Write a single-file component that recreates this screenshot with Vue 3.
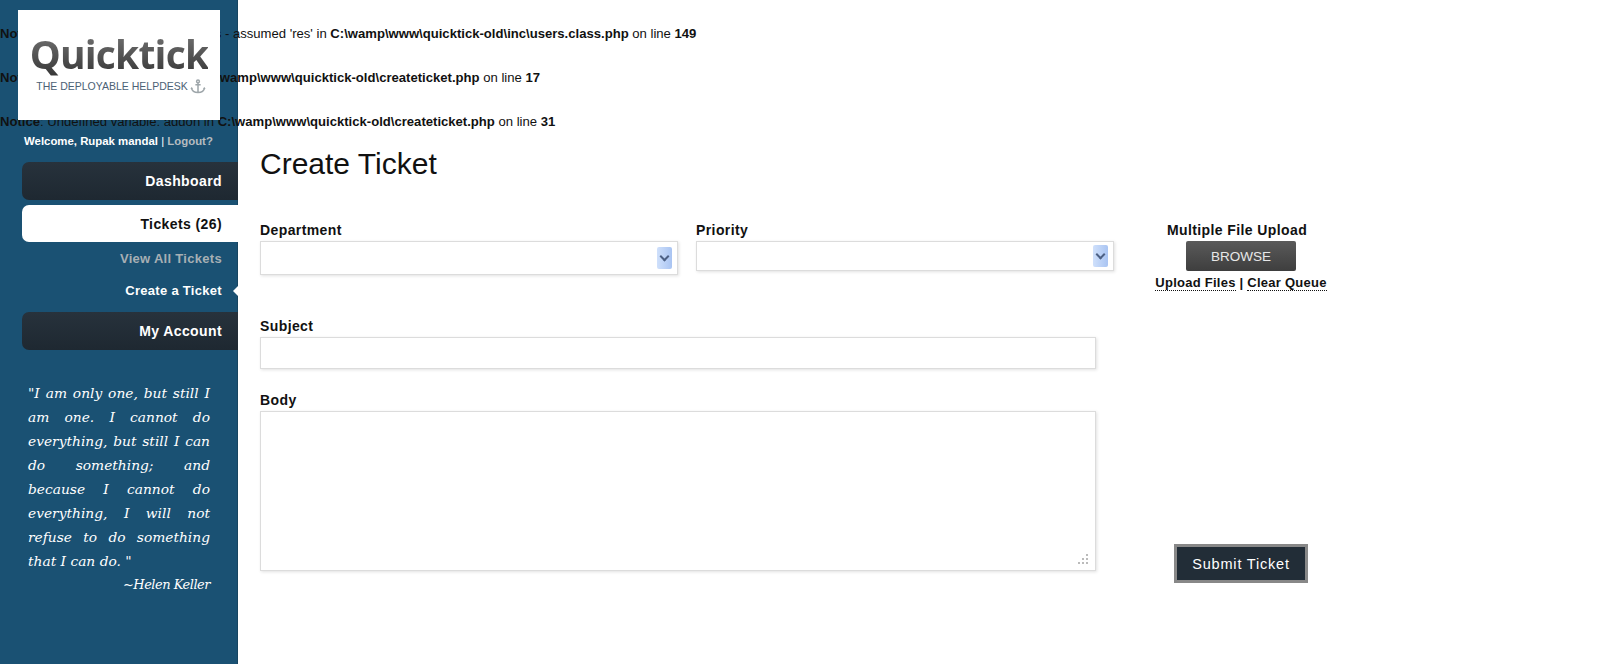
<script setup>
import { ref } from "vue";

const notices = ref([
  { msg: "Use of undefined constant res - assumed 'res' in ", file: "C:\\wamp\\www\\quicktick-old\\inc\\users.class.php", line: 149 },
  { msg: "Undefined variable: sub in ", file: "C:\\wamp\\www\\quicktick-old\\createticket.php", line: 17 },
  { msg: "Undefined variable: addon in ", file: "C:\\wamp\\www\\quicktick-old\\createticket.php", line: 31 },
]);
</script>

<template>
  <div class="page">
    <aside class="sidebar">
      <div class="logo">
        <span class="logo-name">Quicktick</span>
        <span class="logo-tag">
          THE DEPLOYABLE HELPDESK
          <svg width="16" height="15" viewBox="0 0 16 16" fill="none" stroke="#9ea6aa" stroke-width="1.6">
            <circle cx="8" cy="2.600" r="1.500" />
            <path d="M8 4v10.500M5.200 6h5.600M1 9.500c.5 3 3.500 5 7 5s6.500-2 7-5" />
            <path d="M0 10.500l1.200-2 1.500 1.800zM16 10.500l-1.200-2-1.500 1.800z" fill="#9ea6aa" stroke="none" />
          </svg>
        </span>
      </div>
      <p class="welcome">Welcome, Rupak mandal <span class="sep">|</span> <a class="logout">Logout?</a></p>
      <nav class="nav">
        <a class="nav-item">Dashboard</a>
        <a class="nav-item active">Tickets (26)</a>
        <a class="sub-item first">View All Tickets</a>
        <a class="sub-item current">Create a Ticket</a>
        <a class="nav-item">My Account</a>
      </nav>
      <blockquote class="quote">
        <p>"I am only one, but still I am one. I cannot do everything, but still I can do something; and because I cannot do everything, I will not refuse to do something that I can do. "</p>
        <cite>~Helen Keller</cite>
      </blockquote>
    </aside>

    <div class="notices">
      <p v-for="n in notices" :key="n.line">
        <b>Notice</b>: {{ n.msg }}<b>{{ n.file }}</b> on line <b>{{ n.line }}</b>
      </p>
    </div>

    <main class="content">
      <h1>Create Ticket</h1>
      <div class="form">
        <div class="fields">
          <div class="row-top">
            <div class="field dept">
              <label>Department</label>
              <div class="select tall"><span class="arrow"><i></i></span></div>
            </div>
            <div class="field prio">
              <label>Priority</label>
              <div class="select"><span class="arrow"><i></i></span></div>
            </div>
          </div>
          <div class="field subject">
            <label>Subject</label>
            <input type="text" />
          </div>
          <div class="field body">
            <label>Body</label>
            <div class="textarea-wrap">
              <textarea></textarea>
              <svg class="grip" width="10" height="10" viewBox="0 0 10 10" fill="#bbb">
                <rect x="8" y="0" width="2" height="2" />
                <rect x="4" y="4" width="2" height="2" />
                <rect x="8" y="4" width="2" height="2" />
                <rect x="0" y="8" width="2" height="2" />
                <rect x="4" y="8" width="2" height="2" />
                <rect x="8" y="8" width="2" height="2" />
              </svg>
            </div>
          </div>
        </div>
        <div class="side">
          <div class="upload">
            <strong>Multiple File Upload</strong>
            <button class="browse" type="button">BROWSE</button>
            <div class="links"><a>Upload Files</a> | <a>Clear Queue</a></div>
          </div>
          <button class="submit" type="button">Submit Ticket</button>
        </div>
      </div>
    </main>
  </div>
</template>

<style>
html, body {
  margin: 0;
  background: #fff;
}
</style>

<style scoped>
.page {
  display: grid;
  grid-template-columns: 238px 1fr;
  grid-template-rows: 136px 528px;
  height: 664px;
  overflow: hidden;
  font-family: "Liberation Sans", Arial, sans-serif;
  color: #111;
}

.sidebar {
  grid-column: 1;
  grid-row: 1 / 3;
  background: #1a5173;
  border-right: 1px solid #174561;
  box-sizing: border-box;
  padding-top: 10px;
}

.logo {
  position: relative;
  z-index: 2;
  width: 202px;
  height: 110px;
  margin-left: 18px;
  background: #fff;
  box-sizing: border-box;
  padding-top: 19px;
  display: flex;
  flex-direction: column;
  align-items: center;
}

.logo-name {
  font-family: "Open Sans", sans-serif;
  font-weight: 700;
  font-size: 39px;
  line-height: 50px;
  letter-spacing: -0.8px;
  background: linear-gradient(#777, #333);
  -webkit-background-clip: text;
  background-clip: text;
  color: transparent;
}

.logo-tag {
  display: flex;
  align-items: center;
  gap: 2px;
  padding-left: 4px;
  font-size: 10.5px;
  line-height: 16px;
  color: #4b6175;
  margin-top: -1px;
  white-space: nowrap;
}

.welcome {
  margin: 14px 0 0 24px;
  font-size: 11.4px;
  line-height: 14px;
  font-weight: bold;
  color: #fff;
}

.sep {
  font-weight: normal;
}

.logout {
  color: #b5bcc0;
}

.nav {
  margin: 14px -1px 0 22px;
  display: flex;
  flex-direction: column;
}

.nav-item {
  height: 38px;
  line-height: 39px;
  padding-right: 16px;
  text-align: right;
  font-size: 14px;
  font-weight: bold;
  letter-spacing: 0.4px;
  color: #fff;
  background: linear-gradient(#27323c, #1e2831);
  border-radius: 7px 0 0 7px;
  margin-bottom: 5px;
}

.nav-item.active {
  color: #111;
  background: #fff;
  height: 37px;
  margin-bottom: 0;
}

.sub-item {
  position: relative;
  height: 32px;
  line-height: 32px;
  padding-right: 16px;
  text-align: right;
  font-size: 13px;
  font-weight: bold;
  letter-spacing: 0.3px;
  color: #a7afb4;
}

.sub-item.first {
  margin-top: 1px;
}

.sub-item.current {
  color: #fff;
  margin-bottom: 5px;
}

.sub-item.current::after {
  content: "";
  position: absolute;
  right: 0;
  top: 11px;
  border: 5px solid transparent;
  border-right-color: #fff;
  border-left-width: 0;
}

.quote {
  margin: 26px 27px 0 28px;
  font-family: "DejaVu Serif", serif;
  font-style: italic;
  font-size: 13.8px;
  line-height: 24px;
  color: #fff;
}

.quote p {
  margin: 0;
  text-align: justify;
}

.quote cite {
  display: block;
  text-align: right;
  font-size: 13px;
  letter-spacing: -0.5px;
}

.notices {
  grid-column: 1 / 3;
  grid-row: 1;
  position: relative;
  z-index: 1;
  font-size: 13.1px;
  line-height: 14px;
  padding-top: 27px;
}

.notices p {
  margin: 0 0 30px;
  white-space: nowrap;
}

.content {
  grid-column: 2;
  grid-row: 2;
  padding: 10px 0 0 22px;
}

h1 {
  margin: 0;
  font-size: 30px;
  font-weight: normal;
  line-height: 36px;
}

label,
.upload strong {
  display: block;
  font-size: 14px;
  font-weight: bold;
  line-height: 16px;
  letter-spacing: 0.4px;
}

.upload strong {
  padding-right: 8px;
}

.form {
  display: flex;
  margin-top: 40px;
}

.fields {
  width: 854px;
  flex-shrink: 0;
}

.row-top {
  display: flex;
  gap: 18px;
  height: 96px;
}

label {
  margin-bottom: 3px;
}

.select,
input,
textarea {
  display: block;
  box-sizing: border-box;
  background: #fff;
  border: 1px solid #dcdcdc;
  box-shadow: 1px 1px 3px rgba(0, 0, 0, 0.12);
}

.dept { width: 418px; }
.prio { width: 418px; }

.select {
  position: relative;
  height: 30px;
}

.select.tall {
  height: 34px;
}

.arrow {
  position: absolute;
  right: 5px;
  top: 50%;
  width: 15px;
  height: 22px;
  margin-top: -11px;
  background: linear-gradient(90deg, #cfe0fb, #a9c4f2);
  border-radius: 2px;
  display: flex;
  align-items: center;
  justify-content: center;
}

.arrow i {
  width: 5px;
  height: 5px;
  margin-top: -3px;
  border-right: 2px solid #4d6185;
  border-bottom: 2px solid #4d6185;
  transform: rotate(45deg);
}

.subject {
  width: 836px;
  height: 74px;
}

input {
  width: 100%;
  height: 32px;
  padding: 0;
}

.body {
  width: 836px;
}

.textarea-wrap {
  position: relative;
}

textarea {
  width: 100%;
  height: 160px;
  padding: 0;
  resize: none;
}

.grip {
  position: absolute;
  right: 8px;
  bottom: 7px;
}

.side {
  width: 250px;
  display: flex;
  flex-direction: column;
  align-items: center;
  margin-left: 2px;
}

.upload {
  text-align: center;
  height: 322px;
}

.browse {
  display: block;
  width: 110px;
  height: 30px;
  margin: 3px auto 4px;
  border: 0;
  border-radius: 2px;
  background: linear-gradient(#5a5a5a, #3e3e3e);
  color: #e8e8e8;
  font-family: "Liberation Sans", Arial, sans-serif;
  font-size: 13.5px;
}

.links {
  font-size: 13px;
  font-weight: bold;
  line-height: 16px;
  letter-spacing: 0.25px;
}

.links a {
  border-bottom: 1px dotted #111;
}

.submit {
  width: 134px;
  height: 39px;
  border: 3px solid #888;
  background: #222d37;
  color: #fff;
  font-family: "Liberation Sans", Arial, sans-serif;
  font-size: 14.5px;
  letter-spacing: 0.8px;
}
</style>
